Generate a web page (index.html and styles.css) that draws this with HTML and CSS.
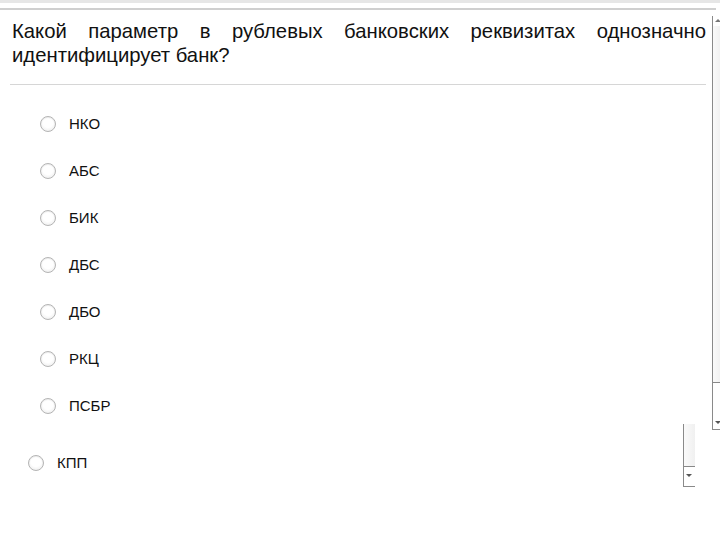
FILE: index.html
```html
<!DOCTYPE html>
<html lang="ru">
<head>
<meta charset="utf-8">
<link rel="stylesheet" href="styles.css">
</head>
<body>
<div class="topband"></div>
<div class="topline"></div>
<div class="page">
  <p class="question">Какой параметр в рублевых банковских реквизитах однозначно идентифицирует банк?</p>
  <div class="rule"></div>
  <ul class="options">
    <li class="opt"><span class="radio"></span><span>НКО</span></li>
    <li class="opt"><span class="radio"></span><span>АБС</span></li>
    <li class="opt"><span class="radio"></span><span>БИК</span></li>
    <li class="opt"><span class="radio"></span><span>ДБС</span></li>
    <li class="opt"><span class="radio"></span><span>ДБО</span></li>
    <li class="opt"><span class="radio"></span><span>РКЦ</span></li>
    <li class="opt"><span class="radio"></span><span>ПСБР</span></li>
  </ul>
  <div class="opt extra"><span class="radio"></span><span>КПП</span></div>
</div>
<div class="scroll main-scroll">
  <div class="arrow up"></div>
  <div class="track"></div>
  <div class="thumbline"></div>
  <div class="arrow down"></div>
</div>
<div class="scroll small-scroll">
  <div class="track"></div>
  <div class="thumbline"></div>
  <div class="arrow down"></div>
</div>
</body>
</html>
```
FILE: styles.css
```css
html, body {
  margin: 0;
  padding: 0;
  background: #fff;
  width: 720px;
  height: 540px;
  overflow: hidden;
  font-family: "Liberation Sans", Arial, sans-serif;
  color: #111;
}
.topband {
  height: 3px;
  background: #e6e6e6;
}
.topline {
  margin-top: 5px;
  height: 2px;
  background: #cfcfcf;
  width: 716px;
}
.page {
  padding-left: 12px;
  width: 694px;
}
.question {
  margin: 9px 0 0 0;
  font-size: 20.3px;
  line-height: 24px;
  text-align: justify;
  text-align-last: left;
}
.rule {
  margin: 17px 0 0 -2px;
  height: 1px;
  background: #d6d6d6;
}
.options {
  list-style: none;
  margin: 15px 0 0 0;
  padding: 0 0 0 28px;
}
.opt {
  display: flex;
  align-items: center;
  gap: 13px;
  height: 47px;
  font-size: 15px;
}
.extra {
  margin-top: 10px;
  padding-left: 16px;
  gap: 13px;
}
.radio {
  width: 14px;
  height: 14px;
  border-radius: 50%;
  border: 1px solid #b4b4b4;
  background: radial-gradient(circle at 50% 40%, #ffffff 45%, #e6e6e6 100%);
  box-shadow: inset 0 1px 1px rgba(0,0,0,0.08);
  flex: none;
}
.scroll {
  position: absolute;
  border-left: 1px solid #8a8a8a;
  display: flex;
  flex-direction: column;
}
.main-scroll {
  left: 712px;
  top: 16px;
  width: 8px;
  height: 414px;
}
.small-scroll {
  left: 683px;
  top: 424px;
  width: 11px;
  height: 63px;
}
.track {
  flex: 1;
  background: linear-gradient(90deg, #fafafa, #f0f0f0);
}
.thumbline {
  height: 1px;
  background: #888;
}
.arrow {
  height: 10px;
  position: relative;
}
.arrow.up::after, .arrow.down::after {
  content: "";
  position: absolute;
  left: 2px;
  width: 0;
  height: 0;
  border-left: 3px solid transparent;
  border-right: 3px solid transparent;
}
.arrow.up::after {
  top: 3px;
  border-bottom: 3px solid #777;
}
.arrow.down {
  border-bottom: 1px solid #8a8a8a;
  height: 18px;
}
.arrow.down::after {
  top: 7px;
  border-top: 3px solid #555;
}
.main-scroll .arrow.down { height: 46px; }
.main-scroll .arrow.down::after { top: 38px; }
.small-scroll .arrow.down { height: 19px; }
```
